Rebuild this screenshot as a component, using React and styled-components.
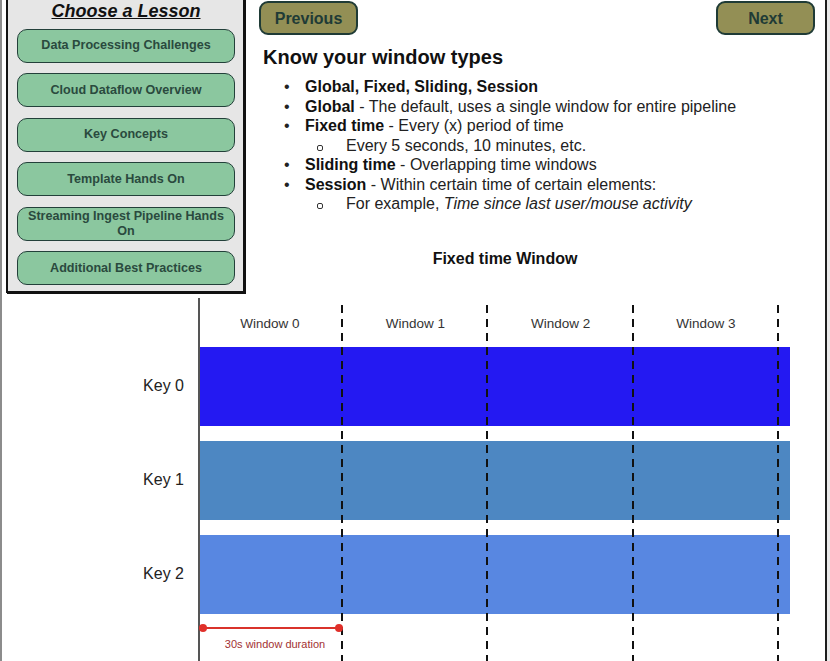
import styled, { createGlobalStyle } from "styled-components";

const GlobalStyle = createGlobalStyle`
  html, body {
    margin: 0;
    padding: 0;
    background: #e9e9e9;
    font-family: "Liberation Sans", Arial, sans-serif;
  }
`;

const lessons = [
  "Data Processing Challenges",
  "Cloud Dataflow Overview",
  "Key Concepts",
  "Template Hands On",
  "Streaming Ingest Pipeline Hands On",
  "Additional Best Practices",
];

const windows = ["Window 0", "Window 1", "Window 2", "Window 3"];
const dividers = [342, 487, 633, 778];
const keys = [
  { label: "Key 0", y: 347, color: "#2419f2" },
  { label: "Key 1", y: 441, color: "#4d87c2" },
  { label: "Key 2", y: 535, color: "#5887e1" },
];

export default function App() {
  return (
    <>
      <GlobalStyle />
      <Frame>
        <TopRow>
          <Menu>
            <MenuTitle>Choose a Lesson</MenuTitle>
            {lessons.map((l) => (
              <LessonButton key={l}>{l}</LessonButton>
            ))}
          </Menu>
          <Column>
            <NavBar>
              <NavButton>Previous</NavButton>
              <NavButton>Next</NavButton>
            </NavBar>
            <Heading>Know your window types</Heading>
            <List>
              <Item>
                <span>
                  <b>Global, Fixed, Sliding, Session</b>
                </span>
              </Item>
              <Item>
                <span>
                  <b>Global</b> - The default, uses a single window for entire pipeline
                </span>
              </Item>
              <Item>
                <span>
                  <b>Fixed time</b> - Every (x) period of time
                </span>
              </Item>
              <SubItem>
                <span>Every 5 seconds, 10 minutes, etc.</span>
              </SubItem>
              <Item>
                <span>
                  <b>Sliding time</b> - Overlapping time windows
                </span>
              </Item>
              <Item>
                <span>
                  <b>Session</b> - Within certain time of certain elements:
                </span>
              </Item>
              <SubItem>
                <span>
                  For example, <i>Time since last user/mouse activity</i>
                </span>
              </SubItem>
            </List>
            <ChartTitle>Fixed time Window</ChartTitle>
          </Column>
        </TopRow>
        <Chart viewBox="0 296 823 365" width="823" height="365">
          {keys.map((k) => (
            <g key={k.label}>
              <rect x="197" y={k.y} width="591" height="79" fill={k.color} />
              <text
                x="182"
                y={k.y + 44}
                textAnchor="end"
                fontSize="16"
                fill="#222"
              >
                {k.label}
              </text>
            </g>
          ))}
          <line x1="197" y1="298" x2="197" y2="661" stroke="#555" strokeWidth="2" />
          {dividers.map((x) => (
            <line
              key={x}
              x1={x - 2}
              y1="305"
              x2={x - 2}
              y2="661"
              stroke="#111"
              strokeWidth="2"
              strokeDasharray="8 6"
            />
          ))}
          {windows.map((w, i) => (
            <text
              key={w}
              x={268 + i * 145.3}
              y="328"
              textAnchor="middle"
              fontSize="13.5"
              fill="#333"
            >
              {w}
            </text>
          ))}
          <line x1="201" y1="628" x2="337" y2="628" stroke="#d9322b" strokeWidth="2" />
          <circle cx="201" cy="628" r="4" fill="#e0302a" />
          <circle cx="337" cy="628" r="4" fill="#e0302a" />
          <text x="273" y="648" textAnchor="middle" fontSize="11" fill="#a23232">
            30s window duration
          </text>
        </Chart>
      </Frame>
    </>
  );
}

const Frame = styled.div`
  width: 823px;
  height: 661px;
  overflow: hidden;
  background: #ffffff;
  border-left: 2px solid #8c8c8c;
  border-right: 2px solid #1c1c1c;
`;

const TopRow = styled.div`
  display: flex;
  align-items: flex-start;
  gap: 14px;
  height: 296px;
`;

const Menu = styled.div`
  box-sizing: border-box;
  width: 239px;
  margin-left: 4px;
  margin-top: -3px;
  padding: 0 8px 6px 9px;
  background: #e6e6e6;
  border: 2px solid #111;
  box-shadow: 1px 1px 0 #111;
  display: flex;
  flex-direction: column;
  gap: 10.5px;
`;

const MenuTitle = styled.div`
  font-size: 18px;
  font-weight: bold;
  font-style: italic;
  text-decoration: underline;
  color: #111;
  text-align: center;
  line-height: 22px;
  margin-top: 1px;
  margin-bottom: -4px;
`;

const LessonButton = styled.div`
  box-sizing: border-box;
  height: 34px;
  display: flex;
  align-items: center;
  justify-content: center;
  text-align: center;
  padding: 0 8px;
  background: #8bc79f;
  border: 1px solid #23403a;
  border-radius: 10px;
  color: #2a4a3e;
  font-size: 12.6px;
  font-weight: bold;
  line-height: 15px;
`;

const Column = styled.div`
  width: 556px;
  display: flex;
  flex-direction: column;
`;

const NavBar = styled.div`
  display: flex;
  justify-content: space-between;
  padding-top: 1px;
`;

const NavButton = styled.div`
  box-sizing: border-box;
  width: 99px;
  height: 34px;
  padding-top: 2px;
  display: flex;
  align-items: center;
  justify-content: center;
  background: #938f55;
  border: 2px solid #1f3b36;
  border-radius: 9px;
  color: #1f3b36;
  font-size: 16px;
  font-weight: bold;
`;

const Heading = styled.div`
  margin: 10px 0 0 4px;
  font-size: 20px;
  font-weight: bold;
  line-height: 24px;
  color: #111;
`;

const List = styled.div`
  margin-top: 8px;
  padding-left: 25px;
  font-size: 16px;
  line-height: 19.5px;
  color: #222;
`;

const Item = styled.div`
  display: flex;
  &::before {
    content: "•";
    width: 21px;
    flex-shrink: 0;
  }
  b {
    color: #111;
  }
`;

const SubItem = styled.div`
  display: flex;
  padding-left: 33px;
  &::before {
    content: "";
    width: 4px;
    height: 4px;
    margin: 9px 23px 0 0;
    border: 1px solid #333;
    border-radius: 2px;
    flex-shrink: 0;
  }
`;

const ChartTitle = styled.div`
  width: 492px;
  margin-top: 36px;
  text-align: center;
  font-size: 16px;
  font-weight: bold;
  color: #111;
`;

const Chart = styled.svg`
  display: block;
  font-family: "Liberation Sans", Arial, sans-serif;
`;
